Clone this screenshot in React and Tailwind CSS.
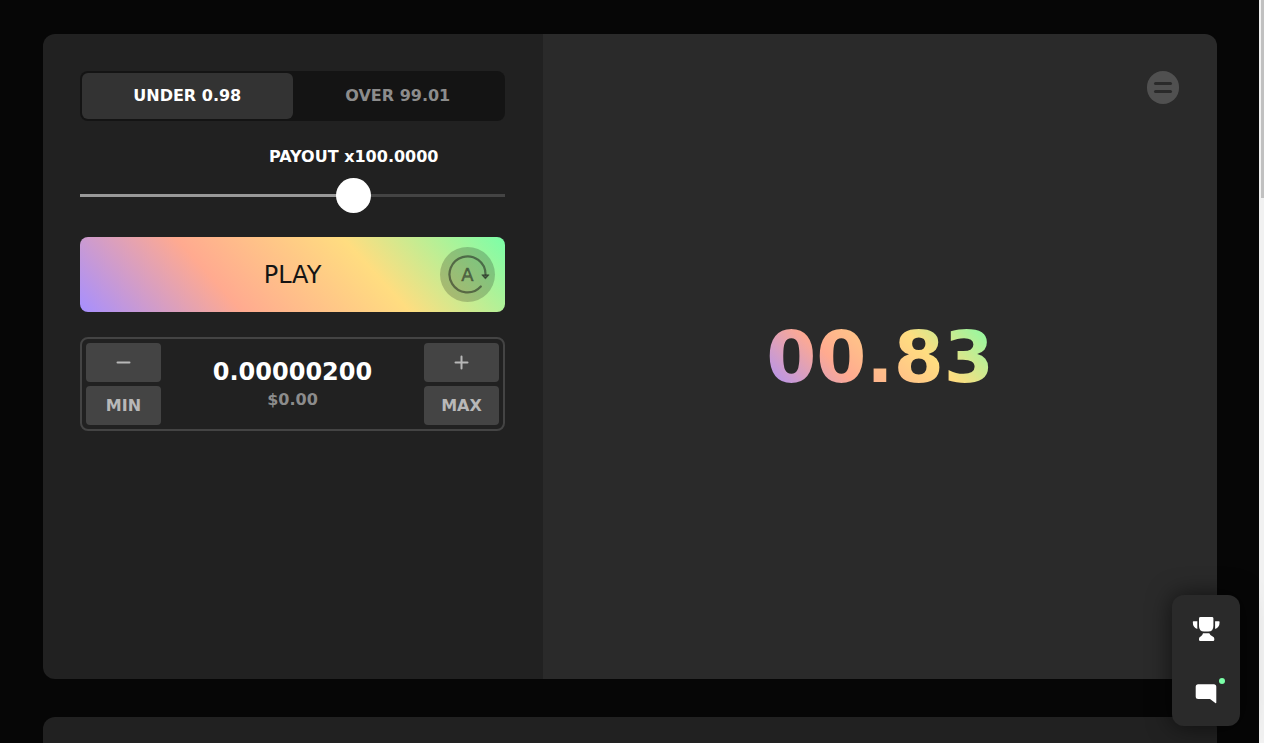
import { useState } from 'react';

const MODES = [
  { id: 'under', label: 'UNDER 0.98' },
  { id: 'over', label: 'OVER 99.01' },
];

function TrophyIcon() {
  return (
    <svg width="28" height="26" viewBox="0 0 28 26" fill="currentColor" aria-hidden="true">
      <path d="M8.5 1h11.5q1.4 0 1.4 1.4v7.6q0 5.6-5.2 5.6h-4Q7 15.6 7 10V2.4Q7 1 8.5 1z" />
      <path d="M1.5 5.2h3.8v7.7Q.8 11.6.8 6q0-.8.7-.8z" />
      <path d="M26.900 5.2h-3.8v7.7q4.5-1.3 4.5-6.9 0-.8-.7-.8z" />
      <path d="M11 17.2h6.300q.8 2 3 3 2 .8 2 2.6v1q0 1.2-1.200 1.2H8.200Q7 25 7 23.800v-1q0-1.800 2-2.600 1.500-.8 2-3z" />
    </svg>
  );
}

function ChatIcon() {
  return (
    <svg width="22" height="20" viewBox="0 0 22 20" fill="currentColor" aria-hidden="true">
      <path d="M3.2.3h15.6q2.5 0 2.5 2.5v15.7q0 1.200-1 .6l-5.300-4.2H3.200Q.7 14.900.7 12.400V2.8Q.7.3 3.200.3z" />
    </svg>
  );
}

function AutoIcon() {
  return (
    <svg width="55" height="55" viewBox="0 0 55 55" aria-hidden="true">
      <path
        d="M45.500 27.300A18 18 0 1 0 40.800 39.500"
        fill="none"
        stroke="currentColor"
        strokeWidth="2.200"
        strokeLinecap="round"
      />
      <path
        d="M42 27.900h6.800l-3.400 3.600z"
        fill="currentColor"
        stroke="currentColor"
        strokeWidth="1.200"
        strokeLinejoin="round"
      />
      <text x="27.500" y="34" textAnchor="middle" fontSize="18" fill="currentColor" stroke="currentColor" strokeWidth="0.500">
        A
      </text>
    </svg>
  );
}

function StepButton({ label, onClick, children }) {
  return (
    <button
      type="button"
      aria-label={label}
      onClick={onClick}
      className="flex h-[39px] w-[75px] items-center justify-center rounded-sm bg-[#444444] text-base font-bold text-[#b8b8b8] hover:bg-[#4d4d4d]"
    >
      {children}
    </button>
  );
}

function PayoutSlider() {
  const [value, setValue] = useState(657);
  const ratio = value / 1000;
  // the thumb is 35px wide, so its centre travels 100% - 35px
  const center = `calc(17.5px + ${ratio} * (100% - 35px))`;

  return (
    <div className="mt-6">
      <label
        htmlFor="payout"
        className="block w-fit -translate-x-1/2 text-base leading-6 font-bold whitespace-nowrap text-white"
        style={{ marginLeft: center }}
      >
        PAYOUT x100.0000
      </label>
      <div className="mt-2 flex h-9 items-center">
        <input
          id="payout"
          type="range"
          min="0"
          max="1000"
          value={value}
          onChange={(e) => setValue(Number(e.target.value))}
          className="h-[3px] w-full cursor-pointer appearance-none [&::-webkit-slider-thumb]:size-[35px] [&::-webkit-slider-thumb]:appearance-none [&::-webkit-slider-thumb]:rounded-full [&::-webkit-slider-thumb]:bg-white"
          style={{ background: `linear-gradient(to right, #999999 ${center}, #444444 ${center})` }}
        />
      </div>
    </div>
  );
}

function BetAmount() {
  const [amount, setAmount] = useState('0.00000200');
  const step = (factor) => setAmount((a) => (Number(a) * factor).toFixed(8));

  return (
    <div className="mt-[25px] flex items-center justify-between rounded-lg border-2 border-[#444444] p-1">
      <div className="flex flex-col gap-1">
        <StepButton label="Halve bet" onClick={() => step(0.5)}>
          <svg width="15" height="15" viewBox="0 0 15 15" stroke="currentColor" strokeWidth="2" strokeLinecap="round" aria-hidden="true">
            <path d="M1.5 7.5h12" />
          </svg>
        </StepButton>
        <StepButton onClick={() => setAmount('0.00000001')}>MIN</StepButton>
      </div>

      <div className="flex min-w-0 flex-1 flex-col items-center">
        <input
          type="text"
          aria-label="Bet amount"
          value={amount}
          onChange={(e) => setAmount(e.target.value)}
          className="w-full bg-transparent text-center text-2xl leading-8 font-bold text-white outline-none"
        />
        <span className="text-base leading-6 font-bold text-[#8c8c8c]">$0.00</span>
      </div>

      <div className="flex flex-col gap-1">
        <StepButton label="Double bet" onClick={() => step(2)}>
          <svg width="15" height="15" viewBox="0 0 15 15" stroke="currentColor" strokeWidth="2" strokeLinecap="round" aria-hidden="true">
            <path d="M1.5 7.5h12M7.5 1.5v12" />
          </svg>
        </StepButton>
        <StepButton onClick={() => setAmount('1.00000000')}>MAX</StepButton>
      </div>
    </div>
  );
}

function Controls() {
  const [mode, setMode] = useState('under');

  return (
    <section className="w-[500px] shrink-0 bg-[#212121] py-[37px] pr-[38px] pl-[37px]">
      <div className="flex h-[50px] rounded-lg bg-[#141414] p-0.5">
        {MODES.map((m) => (
          <button
            key={m.id}
            type="button"
            aria-pressed={mode === m.id}
            onClick={() => setMode(m.id)}
            className={
              mode === m.id
                ? 'flex-1 rounded-md bg-[#333333] text-base font-bold text-white'
                : 'flex-1 rounded-md text-base font-bold text-[#8c8c8c]'
            }
          >
            {m.label}
          </button>
        ))}
      </div>

      <PayoutSlider />

      <div className="mt-6 grid h-[75px] items-center rounded-lg bg-[linear-gradient(48deg,#a68fff,#ffaa90_33%,#ffdd80_67%,#7bffa8)]">
        <button type="button" className="col-start-1 row-start-1 h-full rounded-lg text-2xl text-[#141414]">
          PLAY
        </button>
        <button
          type="button"
          aria-label="Auto play"
          className="col-start-1 row-start-1 mr-2.5 size-[55px] justify-self-end rounded-full bg-black/20 text-[#141414]/50"
        >
          <AutoIcon />
        </button>
      </div>

      <BetAmount />
    </section>
  );
}

function Result() {
  return (
    <section className="grid min-w-0 flex-1 bg-[#2a2a2a]">
      <output className="col-start-1 row-start-1 place-self-center bg-[linear-gradient(45deg,#a68fff,#ffaa90_33%,#ffdd80_67%,#7bffa8)] bg-clip-text text-7xl font-bold text-transparent">
        00.83
      </output>
      <button
        type="button"
        aria-label="Open menu"
        className="col-start-1 row-start-1 mt-[37px] mr-[38px] flex h-[33px] w-8 flex-col items-center justify-center gap-[5px] self-start justify-self-end rounded-full bg-[#505050]"
      >
        <span className="h-[3px] w-[18px] rounded-full bg-[#2a2a2a]" />
        <span className="h-[3px] w-[18px] rounded-full bg-[#2a2a2a]" />
      </button>
    </section>
  );
}

function FloatingMenu() {
  return (
    <nav className="fixed right-6 bottom-[17px] flex w-[68px] flex-col rounded-xl bg-[#2a2a2a] text-white shadow-[0_0_24px_rgba(0,0,0,0.6)]">
      <button type="button" aria-label="Leaderboard" className="flex h-[67px] items-center justify-center">
        <TrophyIcon />
      </button>
      <button type="button" aria-label="Chat" className="relative flex h-16 items-center justify-center">
        <ChatIcon />
        <span className="absolute top-4 right-[15px] size-1.5 rounded-full bg-[#7bffa8]" />
      </button>
    </nav>
  );
}

export default function App() {
  return (
    <div className="flex h-screen overflow-hidden bg-[#060606] font-['DejaVu_Sans',sans-serif]">
      <main className="min-w-0 flex-1 px-[42px] pt-[34px] pl-[43px]">
        <div className="flex min-h-[645px] overflow-hidden rounded-xl">
          <Controls />
          <Result />
        </div>
        <div className="mt-[38px] h-40 rounded-xl bg-[#212121]" />
      </main>
      <div className="w-[5px] bg-[#f1f1f1] pl-0.5" aria-hidden="true">
        <div className="h-[198px] bg-[#c1c1c1]" />
      </div>
      <FloatingMenu />
    </div>
  );
}
